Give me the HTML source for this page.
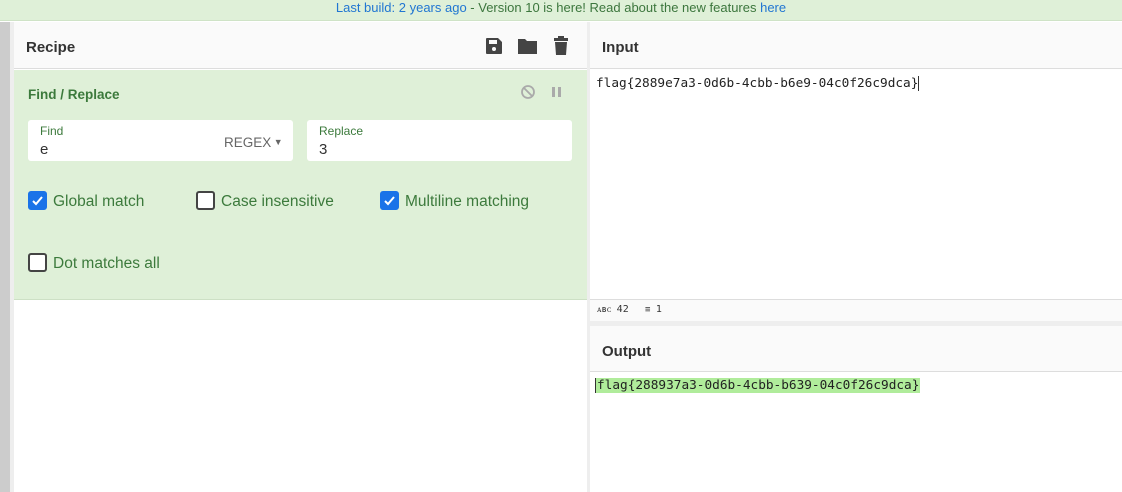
<!DOCTYPE html><html><head><style>
*{box-sizing:border-box;margin:0;padding:0}
body{width:1122px;height:492px;overflow:hidden;background:#fff;font-family:"Liberation Sans",sans-serif;position:relative}
.a{position:absolute}
.mono{font-family:"DejaVu Sans Mono","Liberation Mono",monospace;font-size:12.75px;color:#222}
.h{font-weight:bold;font-size:15px;color:#333}
.cb{position:absolute;width:19px;height:19px;border:2px solid #444;border-radius:3px;background:#fff}
.cb.on{background:#1a73e8;border-color:#1a73e8}
.lbl{position:absolute;font-size:15.5px;color:#3c7a3c}
</style></head><body>
<div class="a" style="left:0;top:0;width:1122px;height:21px;background:#dff0d8;border-bottom:1px solid #cfe3c7;text-align:center;font-size:13px;line-height:15px;color:#3c763d"><span style="color:#2176d2">Last build: 2 years ago</span> - Version 10 is here! Read about the new features <span style="color:#2176d2">here</span></div>
<div class="a" style="left:0;top:22px;width:10px;height:470px;background:#ccc"></div>
<div class="a" style="left:10px;top:22px;width:4px;height:470px;background:#eee"></div>
<div class="a" style="left:14px;top:22px;width:573px;height:47px;background:#fafafa;border-bottom:1px solid #ddd"></div>
<div class="a h" style="left:26px;top:39px">Recipe</div>
<svg class="a" style="left:484px;top:36px" width="20" height="20" viewBox="0 0 20 20"><path d="M2 3a1 1 0 011-1h11l4 4v11a1 1 0 01-1 1H3a1 1 0 01-1-1z" fill="#444"/><rect x="5" y="4" width="8" height="4" fill="#fafafa"/><circle cx="10" cy="13" r="2" fill="#fafafa"/></svg>
<svg class="a" style="left:517px;top:37px" width="22" height="18" viewBox="0 0 22 18"><path d="M1 2h7l2 2h10v13H1z" fill="#444"/></svg>
<svg class="a" style="left:553px;top:36px" width="16" height="20" viewBox="0 0 16 20"><rect x="1" y="2" width="14" height="3" fill="#444"/><rect x="5" y="0" width="6" height="3" fill="#444"/><path d="M2 6h12l-1 13H3z" fill="#444"/></svg>
<div class="a" style="left:14px;top:70px;width:573px;height:230px;background:#dff0d8;border-bottom:1px solid #cde0c5"></div>
<div class="a" style="left:28px;top:87px;font-weight:bold;font-size:13.5px;color:#3c7a3c">Find / Replace</div>
<svg class="a" style="left:520px;top:84px" width="16" height="16" viewBox="0 0 16 16"><circle cx="8" cy="8" r="6" fill="none" stroke="#aaa" stroke-width="1.8"/><path d="M4 4l8 8" stroke="#aaa" stroke-width="1.8"/></svg>
<div class="a" style="left:552px;top:87px;width:3px;height:10px;background:#aaa"></div>
<div class="a" style="left:558px;top:87px;width:3px;height:10px;background:#aaa"></div>
<div class="a" style="left:28px;top:120px;width:265px;height:41px;background:#fff;border-radius:3px"></div>
<div class="a" style="left:40px;top:124px;font-size:12px;color:#3c7a3c">Find</div>
<div class="a" style="left:40px;top:141px;font-size:15px;color:#333">e</div>
<div class="a" style="left:224px;top:135px;font-size:13.5px;color:#666">REGEX<span style="font-size:9px;vertical-align:2px"> ▼</span></div>
<div class="a" style="left:307px;top:120px;width:265px;height:41px;background:#fff;border-radius:3px"></div>
<div class="a" style="left:319px;top:124px;font-size:12px;color:#3c7a3c">Replace</div>
<div class="a" style="left:319px;top:141px;font-size:15px;color:#333">3</div>
<div class="cb on" style="left:28px;top:191px"><svg width="15" height="15" viewBox="0 0 15 15"><path d="M3 8l3 3 6-7" stroke="#fff" stroke-width="2" fill="none"/></svg></div>
<div class="lbl" style="left:53px;top:193px">Global match</div>
<div class="cb" style="left:196px;top:191px"></div>
<div class="lbl" style="left:221px;top:193px">Case insensitive</div>
<div class="cb on" style="left:380px;top:191px"><svg width="15" height="15" viewBox="0 0 15 15"><path d="M3 8l3 3 6-7" stroke="#fff" stroke-width="2" fill="none"/></svg></div>
<div class="lbl" style="left:405px;top:193px">Multiline matching</div>
<div class="cb" style="left:28px;top:253px"></div>
<div class="lbl" style="left:53px;top:255px">Dot matches all</div>
<div class="a" style="left:587px;top:22px;width:3px;height:470px;background:#eee"></div>
<div class="a" style="left:590px;top:22px;width:532px;height:47px;background:#fafafa;border-bottom:1px solid #ddd"></div>
<div class="a h" style="left:602px;top:39px">Input</div>
<div class="a mono" style="left:596px;top:76px">flag{2889e7a3-0d6b-4cbb-b6e9-04c0f26c9dca}<span style="border-left:1px solid #333"></span></div>
<div class="a" style="left:590px;top:299px;width:532px;height:22px;background:#fafafa;border-top:1px solid #ddd"></div>
<div class="a" style="left:597px;top:304px;font-size:9px;font-family:'DejaVu Sans Mono',monospace;color:#333">ᴀʙᴄ <span style="font-size:10px">42</span>&nbsp;&nbsp; ≡ <span style="font-size:10px">1</span></div>
<div class="a" style="left:590px;top:321px;width:532px;height:5px;background:#eee"></div>
<div class="a" style="left:590px;top:326px;width:532px;height:46px;background:#fafafa;border-bottom:1px solid #ddd"></div>
<div class="a h" style="left:602px;top:343px">Output</div>
<div class="a mono" style="left:595px;top:378px;background:#b0ec9b;border-left:1px solid #333;padding:0 1px">flag{288937a3-0d6b-4cbb-b639-04c0f26c9dca}</div>
</body></html>
